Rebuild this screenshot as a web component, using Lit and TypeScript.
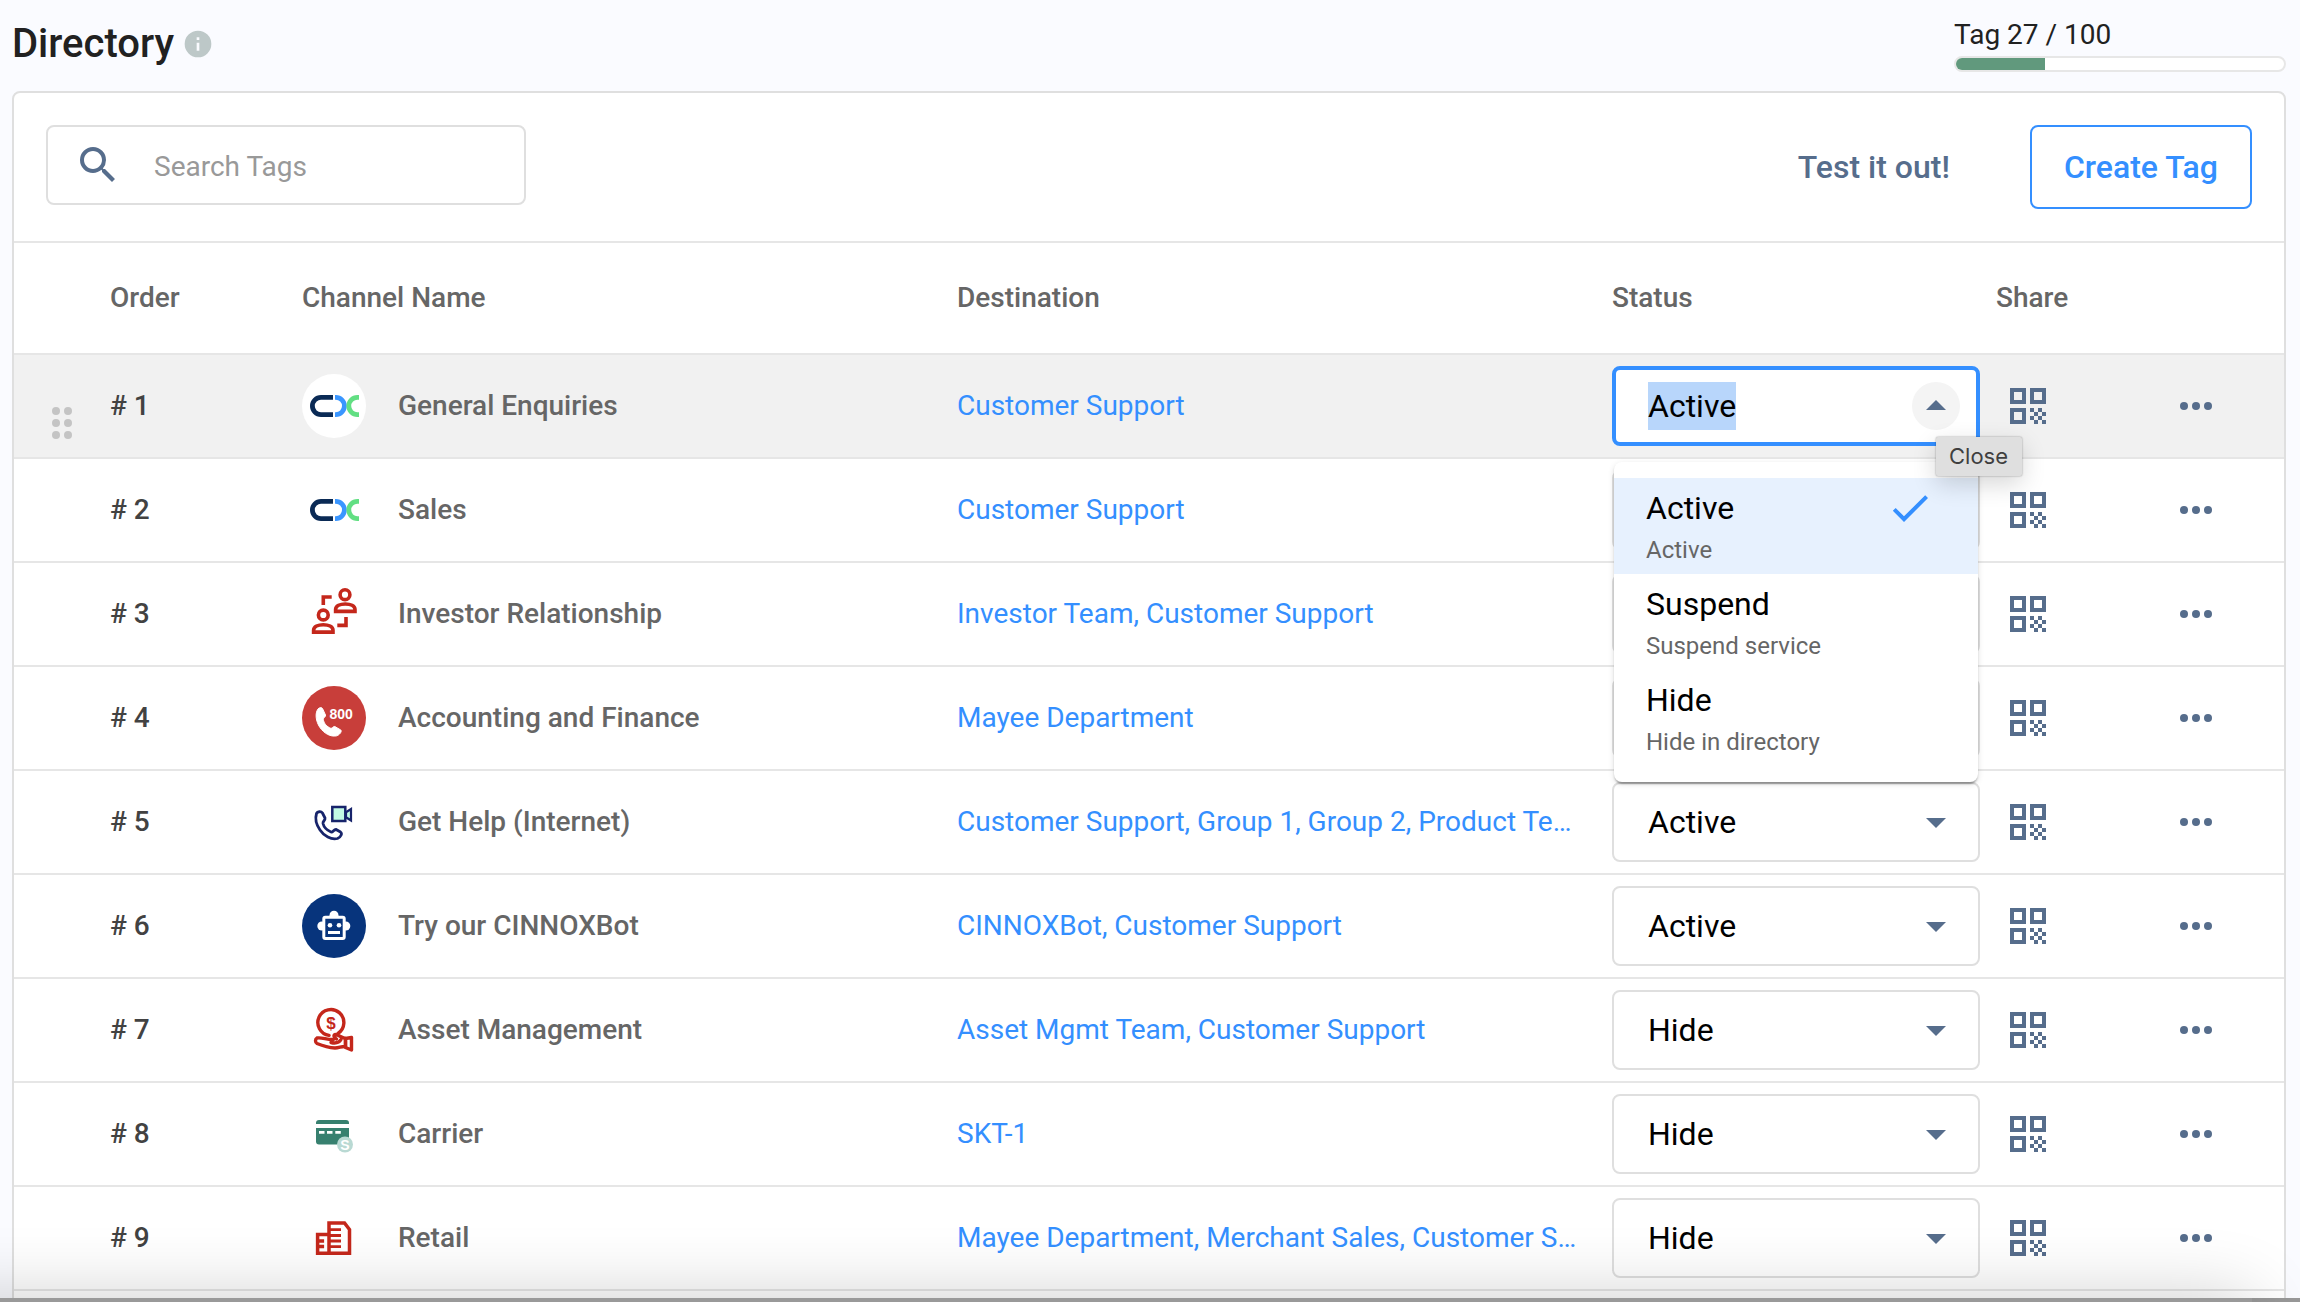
import { LitElement, html, css, svg, nothing } from "lit";
import { customElement } from "lit/decorators.js";

interface Channel {
  name: string;
  icon: string;
  destination: string;
  status: "Active" | "Suspend" | "Hide";
}

const CHANNELS: Channel[] = [
  { name: "General Enquiries", icon: "cx", destination: "Customer Support", status: "Active" },
  { name: "Sales", icon: "cx", destination: "Customer Support", status: "Active" },
  { name: "Investor Relationship", icon: "people", destination: "Investor Team, Customer Support", status: "Active" },
  { name: "Accounting and Finance", icon: "phone800", destination: "Mayee Department", status: "Active" },
  { name: "Get Help (Internet)", icon: "video", destination: "Customer Support, Group 1, Group 2, Product Team", status: "Active" },
  { name: "Try our CINNOXBot", icon: "bot", destination: "CINNOXBot, Customer Support", status: "Active" },
  { name: "Asset Management", icon: "asset", destination: "Asset Mgmt Team, Customer Support", status: "Hide" },
  { name: "Carrier", icon: "card", destination: "SKT-1", status: "Hide" },
  { name: "Retail", icon: "building", destination: "Mayee Department, Merchant Sales, Customer Support", status: "Hide" },
];

const OPTIONS = [
  { label: "Active", note: "Active" },
  { label: "Suspend", note: "Suspend service" },
  { label: "Hide", note: "Hide in directory" },
];

const AVATARS: Record<string, unknown> = {
  cx: svg`
    <circle cx="32" cy="32" r="32" fill="#fff"/>
    <g fill="none" stroke-width="4.800">
      <path d="M31 23.400H19a8.600 8.600 0 0 0 0 17.200H31" stroke="#0a2a55"/>
      <path d="M33 23.400h.8a8.600 8.600 0 0 1 0 17.200H33" stroke="#3a96ff"/>
      <path d="M57 23.400h-1.600a8.600 8.600 0 0 0 0 17.200H57" stroke="#62df83"/>
    </g>`,
  people: svg`
    <g fill="none" stroke="#c4271b" stroke-width="3.600">
      <circle cx="43" cy="12.700" r="4.900"/><circle cx="21.300" cy="33" r="4.900"/>
      <path d="M33.600 29.400v-1.800c0-3.800 4.500-5.600 9.700-5.600s9.700 1.800 9.700 5.600v1.800z"/>
      <path d="M11.600 50.100v-1.800c0-3.800 4.500-5.600 9.700-5.600s9.700 1.800 9.700 5.600v1.800z"/>
      <path d="M21.300 23v-8h8.400M35.300 43.400H44V35"/>
    </g>`,
  phone800: svg`
    <circle cx="32" cy="32" r="32" fill="#c83e3a"/>
    <path d="M16 23c1.500-1.500 3.500-2 4.500-.5l3 6.500c.5 1.800-2.200 2.500-2.200 4.300.5 4 3.500 7.500 7.500 9 1.500.3 2-2 4-1.800l6 3.500c1.500 1.500-1.500 5-4 5.800-6 1.500-13-2.500-17-8.500-4-6-5-14-1.800-18.300z" fill="#fff" stroke="#fff"/>
    <text x="27.500" y="32.500" font-family="Liberation Sans, sans-serif" font-weight="700" font-size="14" fill="#fff">800</text>`,
  video: svg`
    <path d="M14.500 23.500c1-2 4.500-2.500 6-.5l2.500 5c.5 2.500-2.500 3-2 5.500 1 4 4.500 7 8 8.500 2 .5 2.500-2.500 5-2.500l4.500 2.500c2 1.500.5 5-3 6.500-6.500 1.500-13.500-2.500-17.500-8.500-3.500-5-5-11.500-3.500-16.500z" fill="#fff" stroke="#17246b" stroke-width="2.800"/>
    <rect x="30.300" y="17" width="13" height="14" fill="#c3fbe4" stroke="#17246b" stroke-width="2.500"/>
    <path d="M44 22.200l5-3.200v11.500l-5-3.200z" fill="#c3fbe4" stroke="#17246b" stroke-width="2.200"/>`,
  bot: svg`
    <circle cx="32" cy="32" r="32" fill="#07347c"/>
    <circle cx="32" cy="21.300" r="4.500" fill="#fff"/><circle cx="19.800" cy="32" r="4.500" fill="#fff"/><circle cx="43.800" cy="32" r="4.500" fill="#fff"/>
    <rect x="21.800" y="23.200" width="20.400" height="21.200" rx="1.500" fill="#07347c" stroke="#fff" stroke-width="3"/>
    <circle cx="28" cy="31.300" r="2.300" fill="#fff"/><circle cx="37" cy="31.300" r="2.300" fill="#fff"/>
    <rect x="26" y="37" width="12" height="3" fill="#fff"/>`,
  asset: svg`
    <g fill="none" stroke="#c4271b" stroke-width="3.400" stroke-linejoin="round" stroke-linecap="round">
      <path d="M27 37.400a13 13 0 1 1 9-2"/>
      <path d="M31.500 41.500c-6 .5-12-2.500-16.500-1.500-2 1-2 4.500 0 5.500 6 2.500 12 4.200 18 4.500 4 0 7-2 10.500-1.500v-8c-3.500-.5-6-3.500-10.500-4-1.500.5-1.500 3 1.500 4.500"/>
      <path d="M29 44.500c4 1 8 .5 10-3"/>
      <path d="M43.500 40.500l6-1v12.500l-6-2.500z"/>
    </g>
    <text x="29" y="30.500" text-anchor="middle" font-family="Liberation Sans, sans-serif" font-weight="700" font-size="17" fill="#c4271b">$</text>`,
  card: svg`
    <path d="M14 22v-1q0-3 3-3h27q3 0 3 3v1zM14 26h33v13.500a3 3 0 0 1-3 3H17a3 3 0 0 1-3-3z" fill="#37806f"/>
    <path d="M17 30.400h5.500M25 30.400h5.500M33.300 30.400h5.500" stroke="#fff" stroke-width="2.700"/>
    <circle cx="43" cy="42.500" r="8" fill="#b9d9d3"/>
    <text x="43" y="47.500" text-anchor="middle" font-family="Liberation Sans, sans-serif" font-weight="700" font-size="14" fill="#fff">S</text>`,
  building: svg`
    <g fill="none" stroke="#c4271b" stroke-width="3.500">
      <path d="M27 47.300V17h15.500l5 6.500v23.800zM27 28.600H15.600v18.700H27M15.600 35h6.500M15.600 40.600h6.500"/>
      <path d="M27 23.700h12M27 29.500h12M27 35h12M27 40.600h12" stroke-width="2.800"/>
    </g>`,
};

@customElement("app-root")
export class AppRoot extends LitElement {
  static styles = css`
    :host {
      display: block;
      box-sizing: border-box;
      height: 100vh;
      overflow: hidden;
      position: relative;
      padding: 0 14px 0 12px;
      background: #fafbff;
      font-family: Roboto, "Liberation Sans", sans-serif;
      font-size: 28px;
      line-height: 36px;
      color: #666;
    }
    * { box-sizing: border-box; }
    svg { display: block; flex: none; }
    button, input, select { font: inherit; color: inherit; margin: 0; }
    button { background: none; border: 0; padding: 0; cursor: pointer; }
    .top {
      display: flex;
      justify-content: space-between;
      align-items: flex-start;
      height: 91px;
    }
    .title { display: flex; align-items: center; gap: 8px; padding-top: 20px; }
    .title h1 { margin: 0; font-size: 40px; line-height: 48px; font-weight: 500; color: #212121; }
    .quota { width: 332px; padding-top: 17px; color: #212121; }
    .track {
      height: 16px;
      margin-top: 3px;
      border: 2px solid #e7e7e7;
      border-radius: 8px;
      background: #fff;
      overflow: hidden;
    }
    .fill { height: 100%; background: #61997d; }
    .card { background: #fff; border: 2px solid #dfdfdf; border-radius: 8px; }
    .toolbar {
      display: flex;
      align-items: flex-start;
      padding: 32px;
      border-bottom: 2px solid #e6e6e6;
    }
    .search {
      display: flex;
      align-items: center;
      gap: 32px;
      width: 480px;
      height: 80px;
      padding: 0 26px;
      border: 2px solid #dfdfdf;
      border-radius: 8px;
      color: #566d8c;
    }
    .search input { flex: 1; min-width: 0; border: 0; outline: 0; padding: 4px 0 0; background: none; color: #212121; }
    .search input::placeholder { color: #999; opacity: 1; }
    .actions { display: flex; gap: 48px; margin-left: auto; font-size: 32px; font-weight: 500; }
    .test { height: 84px; padding: 0 32px; color: #566d8c; }
    .create { height: 84px; padding: 0 32px; border: 2px solid #348fff; border-radius: 8px; color: #348fff; }
    table { width: 100%; table-layout: fixed; border-collapse: separate; border-spacing: 0; }
    .c-handle { width: 96px; }
    .c-order { width: 192px; }
    .c-status { width: 384px; }
    .c-share { width: 168px; }
    .c-more { width: 120px; }
    th, td { padding: 0; text-align: left; font-weight: 500; border-bottom: 2px solid #e6e6e6; }
    th { height: 112px; }
    td { height: 104px; }
    .hovered td { background: #f1f1f1; }
    .order { color: #424242; }
    .handle { vertical-align: top; padding: 44px 0 0 24px; color: #c4c4c4; }
    .handle button { color: inherit; display: block; }
    .channel { display: flex; align-items: center; gap: 32px; }
    .dest { padding-right: 32px; font-weight: 400; }
    .dest a {
      display: block;
      overflow: hidden;
      text-overflow: ellipsis;
      white-space: nowrap;
      color: #348fff;
      text-decoration: none;
    }
    .status { font-weight: 400; font-size: 32px; color: #000; }
    .field { position: relative; width: 368px; height: 80px; color: #000; }
    .field select, .field input {
      width: 100%;
      height: 100%;
      padding: 0 68px 0 34px;
      border: 2px solid #dfdfdf;
      border-radius: 8px;
      background: #fff;
      outline: 0;
      appearance: none;
      line-height: 48px;
    }
    .field input {
      border: 4px solid #348fff;
      padding-left: 32px;
      background: linear-gradient(#b8d6fb, #b8d6fb) 32px center / 88px 48px no-repeat #fff;
    }
    .field input::selection { background: rgba(184, 214, 251, 0.99); color: #000; }
    .arrow { position: absolute; right: 20px; top: 16px; color: #566d8c; pointer-events: none; }
    .close { position: absolute; right: 20px; top: 16px; border-radius: 50%; background: #f4f4f4; color: #566d8c; }
    .tip {
      position: absolute;
      z-index: 3;
      left: 324px;
      top: 71px;
      padding: 4px 14px 4px 13px;
      border-radius: 2px;
      background: #dfdfdf;
      box-shadow: 0 0 2px rgba(0, 0, 0, 0.4), 0 8px 24px rgba(0, 0, 0, 0.16);
      color: #3f3f3f;
      font: 22px/31px Inter, sans-serif;
    }
    .menu {
      position: absolute;
      z-index: 2;
      left: 2px;
      right: 2px;
      top: 96px;
      margin: 0;
      padding: 16px 0;
      list-style: none;
      border-radius: 8px;
      background: #fff;
      box-shadow: 0 4px 2px -2px rgba(0, 0, 0, 0.2), 0 2px 2px rgba(0, 0, 0, 0.14), 0 2px 6px rgba(0, 0, 0, 0.12);
    }
    .option { display: flex; align-items: flex-start; justify-content: space-between; height: 96px; padding: 6px 44px 6px 32px; }
    .option.chosen { background: #e7f1fe; color: #348fff; }
    .label { display: block; line-height: 48px; color: #000; }
    .note { display: block; font-size: 24px; line-height: 36px; color: #666; }
    .icon { display: block; margin-left: 8px; color: #566d8c; }
    .edge {
      position: absolute;
      left: 0;
      right: 0;
      bottom: 0;
      height: 4px;
      background: #999;
      pointer-events: none;
    }
    .edge::before {
      content: "";
      position: absolute;
      left: -80px;
      right: 48px;
      top: 0;
      height: 80px;
      box-shadow: 0 0 72px rgba(0, 0, 0, 0.2);
    }
  `;

  firstUpdated() {
    const input = this.renderRoot.querySelector<HTMLInputElement>(".current");
    input?.focus({ preventScroll: true });
    input?.select();
  }

  private openStatus(channel: Channel) {
    return html`<div class="field">
      <input class="current" type="text" role="combobox" aria-expanded="true" aria-controls="status-menu"
        aria-label="Status of ${channel.name}" .value=${channel.status} />
      <button class="close" type="button" aria-label="Close">
        <svg width="48" height="48" viewBox="0 0 24 24" fill="currentColor"><path d="M7 14l5-5 5 5z"/></svg>
      </button>
      <ul class="menu" id="status-menu" role="listbox">
        ${OPTIONS.map((o) => {
          const chosen = o.label === channel.status;
          return html`<li class="option ${chosen ? "chosen" : ""}" role="option" aria-selected=${chosen}>
            <span><span class="label">${o.label}</span><span class="note">${o.note}</span></span>
            ${chosen
              ? html`<svg width="48" height="48" viewBox="0 0 24 24" fill="currentColor"><path d="M9 16.170 4.830 12l-1.420 1.410L9 19 21 7l-1.410-1.410z"/></svg>`
              : nothing}
          </li>`;
        })}
      </ul>
      <div class="tip" role="tooltip">Close</div>
    </div>`;
  }

  private closedStatus(channel: Channel) {
    return html`<div class="field">
      <select aria-label="Status of ${channel.name}">
        ${OPTIONS.map((o) => html`<option ?selected=${o.label === channel.status}>${o.label}</option>`)}
      </select>
      <svg class="arrow" width="48" height="48" viewBox="0 0 24 24" fill="currentColor"><path d="M7 10l5 5 5-5z"/></svg>
    </div>`;
  }

  private row(channel: Channel, index: number) {
    const first = index === 0;
    return html`<tr class=${first ? "hovered" : ""}>
      <td class="handle">
        ${first
          ? html`<button type="button" aria-label="Reorder">
              <svg width="48" height="48" viewBox="0 0 48 48" fill="currentColor">
                ${[12, 24, 36].map((y) => svg`<circle cx="18" cy=${y} r="4"/><circle cx="30" cy=${y} r="4"/>`)}
              </svg>
            </button>`
          : nothing}
      </td>
      <td class="order"># ${index + 1}</td>
      <td>
        <div class="channel">
          <svg width="64" height="64" viewBox="0 0 64 64" aria-hidden="true">${AVATARS[channel.icon]}</svg>
          <span>${channel.name}</span>
        </div>
      </td>
      <td class="dest"><a href="#">${channel.destination}</a></td>
      <td class="status">${first ? this.openStatus(channel) : this.closedStatus(channel)}</td>
      <td>
        <button class="icon" type="button" aria-label="Share QR code of ${channel.name}">
          <svg width="48" height="48" viewBox="0 0 12 12" fill="currentColor" fill-rule="evenodd" shape-rendering="crispEdges">
            <path d="M1.500 1.500h4v4h-4zM2.500 2.500v2h2v-2zM6.500 1.500h4v4h-4zM7.500 2.500v2h2v-2zM1.500 6.500h4v4h-4zM2.500 7.500v2h2v-2z"/>
            <path d="M6.500 6.500h1v1h-1zM8.500 6.500h1v1h-1zM7.500 7.500h1v1h-1zM9.500 7.500h1v1h-1zM6.500 8.500h1v1h-1zM8.500 8.500h1v1h-1zM7.500 9.500h1v1h-1zM9.500 9.500h1v1h-1z"/>
          </svg>
        </button>
      </td>
      <td>
        <button class="icon" type="button" aria-label="More actions for ${channel.name}">
          <svg width="48" height="48" viewBox="0 0 24 24" fill="currentColor"><circle cx="6" cy="12" r="2"/><circle cx="12" cy="12" r="2"/><circle cx="18" cy="12" r="2"/></svg>
        </button>
      </td>
    </tr>`;
  }

  render() {
    return html`
      <header class="top">
        <div class="title">
          <h1>Directory</h1>
          <svg width="32" height="32" viewBox="0 0 24 24" fill="#bdc8c8"><path d="M12 2a10 10 0 1 0 0 20 10 10 0 0 0 0-20zm1 15h-2v-6h2zm0-8h-2V7h2z"/></svg>
        </div>
        <div class="quota">
          <div>Tag 27 / 100</div>
          <div class="track" role="progressbar" aria-valuenow="27" aria-valuemin="0" aria-valuemax="100" aria-label="Tags used">
            <div class="fill" style="width:27%"></div>
          </div>
        </div>
      </header>
      <main class="card">
        <div class="toolbar">
          <label class="search">
            <svg width="48" height="48" viewBox="0 0 24 24" fill="currentColor"><path d="M15.500 14h-.790l-.280-.270A6.471 6.471 0 0 0 16 9.500 6.500 6.500 0 1 0 9.500 16c1.610 0 3.090-.590 4.230-1.570l.270.280v.790l5 4.990L20.490 19zm-6 0C7.010 14 5 11.990 5 9.500S7.010 5 9.500 5 14 7.010 14 9.500 11.990 14 9.500 14z"/></svg>
            <input type="search" placeholder="Search Tags" aria-label="Search Tags" />
          </label>
          <div class="actions">
            <button class="test" type="button">Test it out!</button>
            <button class="create" type="button">Create Tag</button>
          </div>
        </div>
        <table>
          <colgroup>
            <col class="c-handle" /><col class="c-order" /><col /><col /><col class="c-status" /><col class="c-share" /><col class="c-more" />
          </colgroup>
          <thead>
            <tr>
              <th></th><th>Order</th><th>Channel Name</th><th>Destination</th><th>Status</th><th>Share</th><th></th>
            </tr>
          </thead>
          <tbody>
            ${CHANNELS.map((c, i) => this.row(c, i))}
            <tr><td colspan="7"></td></tr>
          </tbody>
        </table>
      </main>
      <div class="edge"></div>
    `;
  }
}
